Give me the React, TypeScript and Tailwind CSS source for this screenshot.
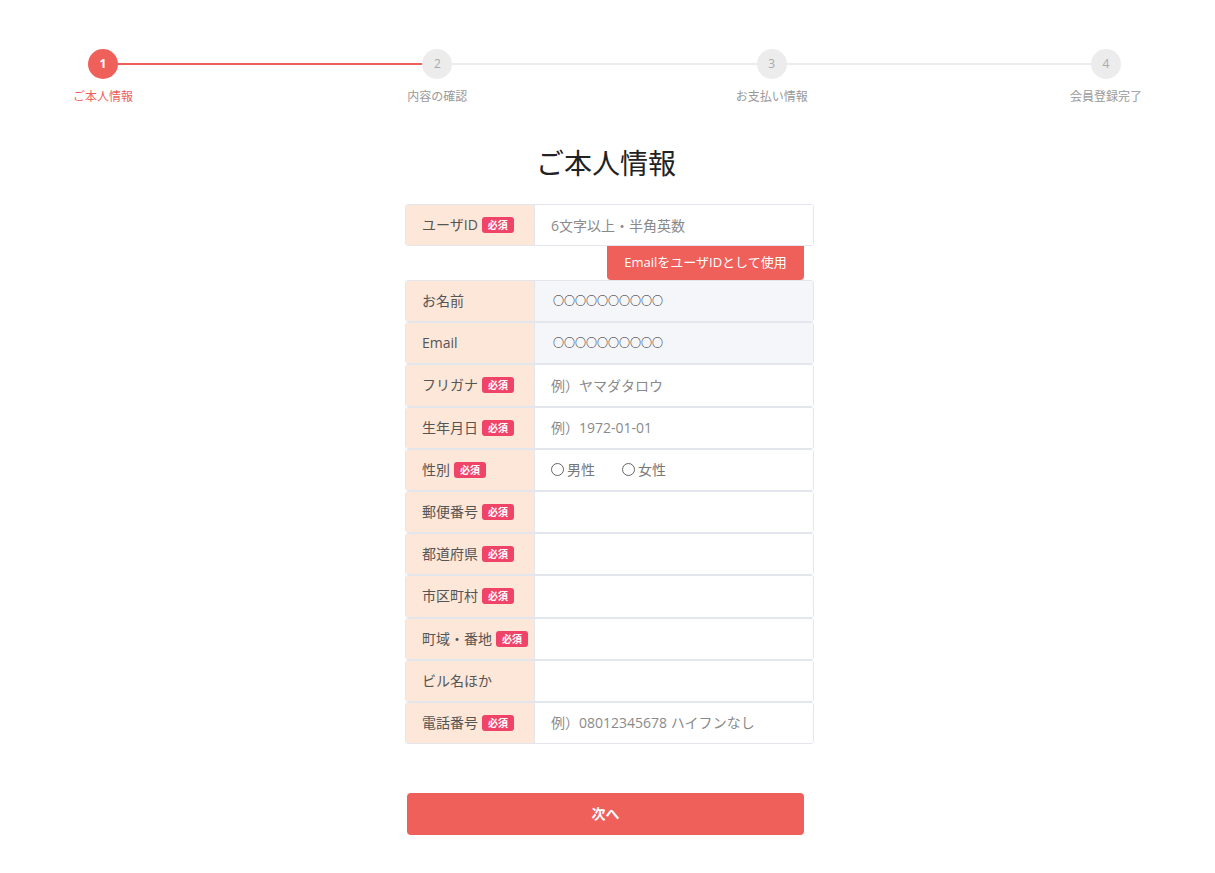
import React from 'react'

// ─── data ─────────────────────────────────────────────────────────────────────

const STEPS = ['ご本人情報', '内容の確認', 'お支払い情報', '会員登録完了']

type Row = {
  label: string
  required?: boolean
  kind: 'text' | 'fixed' | 'radio'
  value?: string
  placeholder?: string
}

const ROWS: Row[] = [
  { label: 'お名前', kind: 'fixed', value: '○○○○○○○○○○' },
  { label: 'Email', kind: 'fixed', value: '○○○○○○○○○○' },
  { label: 'フリガナ', required: true, kind: 'text', placeholder: '例）ヤマダタロウ' },
  { label: '生年月日', required: true, kind: 'text', placeholder: '例）1972-01-01' },
  { label: '性別', required: true, kind: 'radio' },
  { label: '郵便番号', required: true, kind: 'text' },
  { label: '都道府県', required: true, kind: 'text' },
  { label: '市区町村', required: true, kind: 'text' },
  { label: '町域・番地', required: true, kind: 'text' },
  { label: 'ビル名ほか', kind: 'text' },
  { label: '電話番号', required: true, kind: 'text', placeholder: '例）08012345678 ハイフンなし' },
]

const FONT = '"Open Sans", "Noto Sans CJK JP", sans-serif'

// ─── App ──────────────────────────────────────────────────────────────────────

export default function App() {
  return (
    <div className="min-h-[873px] bg-white text-[#555]" style={{ fontFamily: FONT }}>
      <Stepper current={0} />

      <h1 className="mt-[38px] pr-[3px] text-center text-[28px] leading-[40px] text-[#222]">ご本人情報</h1>

      <div className="mt-[21px] flex justify-center pl-[4px]">
        <div className="w-[409px]">
          {/* ユーザID */}
          <FormRow label="ユーザID" required>
            <input
              className="h-full w-full bg-white px-4 text-sm outline-none placeholder:text-[#8a8a8a]"
              placeholder="6文字以上・半角英数"
            />
          </FormRow>
          <div className="flex justify-end pr-[10px]">
            <button
              type="button"
              className="h-[34px] w-[197px] rounded-b-[4px] bg-[#ef605a] text-[13px] text-white"
            >
              EmailをユーザIDとして使用
            </button>
          </div>

          {/* 各項目 */}
          {ROWS.map((row) => (
            <FormRow key={row.label} label={row.label} required={row.required} tall>
              {row.kind === 'fixed' && (
                <div className="flex h-full items-center bg-[#f5f6f9] pl-[18px] text-[11px] font-bold text-[#222]">
                  {row.value}
                </div>
              )}
              {row.kind === 'text' && (
                <input
                  className="h-full w-full bg-white px-4 text-sm outline-none placeholder:text-[#8a8a8a]"
                  placeholder={row.placeholder}
                />
              )}
              {row.kind === 'radio' && (
                <div className="flex h-full items-center gap-[27px] bg-white pl-4 text-sm text-[#777]">
                  <label className="flex items-center gap-[3px]">
                    <span className="h-[13px] w-[13px] rounded-full border border-[#666]" />
                    男性
                  </label>
                  <label className="flex items-center gap-[3px]">
                    <span className="h-[13px] w-[13px] rounded-full border border-[#666]" />
                    女性
                  </label>
                </div>
              )}
            </FormRow>
          ))}

          <button
            type="button"
            className="ml-[2px] mt-[49px] h-[42px] w-[397px] rounded-[4px] bg-[#ef605a] text-sm font-bold text-white"
          >
            次へ
          </button>
        </div>
      </div>
    </div>
  )
}

// ─── ステッパー ───────────────────────────────────────────────────────────────

function Stepper({ current }: { current: number }) {
  return (
    <div className="relative ml-[67px] mr-[73px] flex justify-between pt-[49px]">
      {/* 線 */}
      <div className="absolute left-[36px] right-[36px] top-[63px] h-[2px] bg-[#ececec]" />
      <div className="absolute left-[36px] top-[63px] h-[2px] w-[335px] bg-[#ef605a]" />

      {STEPS.map((s, i) => {
        const active = i === current
        return (
          <div key={s} className="relative flex w-[72px] flex-col items-center">
            <div
              className={`flex h-[30px] w-[30px] items-center justify-center rounded-full text-xs ${
                active ? 'bg-[#ef605a] font-bold text-white' : 'bg-[#ececec] text-[#aaa]'
              }`}
            >
              {i + 1}
            </div>
            <span
              className={`mt-[10px] whitespace-nowrap text-xs leading-4 ${
                active ? 'text-[#ef605a]' : 'text-[#999]'
              }`}
            >
              {s}
            </span>
          </div>
        )
      })}
    </div>
  )
}

// ─── フォーム行 ───────────────────────────────────────────────────────────────

function FormRow({
  label,
  required,
  tall,
  children,
}: {
  label: string
  required?: boolean
  tall?: boolean
  children: React.ReactNode
}) {
  return (
    <div
      className={`flex overflow-hidden rounded-[3px] border border-[#e3e6ed] ${tall ? 'h-[42.2px]' : 'h-[42px]'}`}
    >
      <div className="flex w-[129px] shrink-0 items-center gap-[4px] border-r border-[#e3e6ed] bg-[#fde7d8] pl-4 text-sm text-[#555]">
        <span className="whitespace-nowrap">{label}</span>
        {required && (
          <span className="rounded-[3px] bg-[#ef4468] px-[6px] text-[10px] font-bold leading-[16px] text-white">
            必須
          </span>
        )}
      </div>
      <div className="min-w-0 flex-1">{children}</div>
    </div>
  )
}
